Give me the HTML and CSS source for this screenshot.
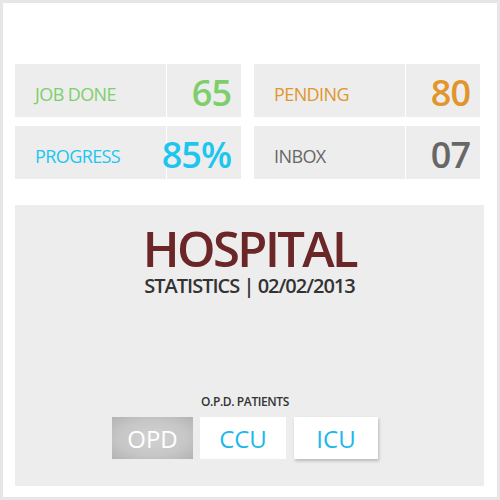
FILE: index.html
```html
<!DOCTYPE html>
<html lang="en">
<head>
  <meta charset="utf-8">
  <meta content="initial-scale=1" name="viewport">
  <title>Hospital Statistics</title>
  <link rel="stylesheet" href="styles.css">
</head>
<body>
  <div class="frame">
    <div class="stats">
      <div class="stat">
        <span class="stat-label green">JOB DONE</span>
        <span class="stat-value green">65</span>
      </div>
      <div class="stat">
        <span class="stat-label orange">PENDING</span>
        <span class="stat-value orange">80</span>
      </div>
      <div class="stat">
        <span class="stat-label cyan">PROGRESS</span>
        <span class="stat-value cyan">85%</span>
      </div>
      <div class="stat">
        <span class="stat-label grey">INBOX</span>
        <span class="stat-value grey">07</span>
      </div>
    </div>
    <div class="panel">
      <h1 class="title">HOSPITAL</h1>
      <p class="subtitle">STATISTICS | 02/02/2013</p>
      <div class="patients">
        <p class="patients-label">O.P.D. PATIENTS</p>
        <div class="tabs">
          <button class="tab tab-active" type="button">OPD</button>
          <button class="tab" type="button">CCU</button>
          <button class="tab tab-raised" type="button">ICU</button>
        </div>
      </div>
    </div>
  </div>
</body>
</html>
```

FILE: styles.css
```css
html, body { margin: 0; padding: 0; font-family: "Open Sans", sans-serif; }
.frame { width: 500px; height: 500px; box-sizing: border-box; border: 3px solid #e6e6e6; background: #fff; padding: 61px 13px 11px 12px; display: flex; flex-direction: column; }
.stats { display: grid; grid-template-columns: 226px 226px; grid-auto-rows: 52px; column-gap: 13px; row-gap: 10px; }
.stat { display: grid; grid-template-columns: 151px 74px; column-gap: 1px; }
.stat-label, .stat-value { background: #ededed; display: flex; align-items: center; padding-top: 6px; box-sizing: border-box; }
.stat-label { font-size: 18px; letter-spacing: -0.6px; padding-left: 20px; }
.stat-value { font-size: 36px; font-weight: 600; letter-spacing: -1px; justify-content: flex-end; padding-right: 10px; padding-top: 4px; }
.green { color: #7ecf6c; }
.orange { color: #e1952b; }
.cyan { color: #1cc6ef; }
.grey { color: #676767; }
.panel { margin-top: 27px; flex: 1; background: #ededed; display: flex; flex-direction: column; align-items: center; padding: 18px 0 27px; }
.title { margin: 0; font-size: 49px; line-height: 50px; font-weight: 600; letter-spacing: -2.6px; color: #6b2627; }
.subtitle { margin: 2px 0 0; font-size: 20px; line-height: 22px; font-weight: 600; letter-spacing: -1px; color: #333; }
.patients { margin-top: auto; display: flex; flex-direction: column; align-items: center; margin-right: 9px; }
.patients-label { margin: 0 0 9px; font-size: 12px; line-height: 1; font-weight: 600; letter-spacing: -0.4px; color: #333; }
.tabs { display: flex; gap: 7px; }
.tab { height: 42px; border: none; border-radius: 0; background: #fff; color: #1bb8e9; font-family: inherit; font-size: 24px; padding: 0; cursor: pointer; }
.tab:nth-child(1) { width: 81px; }
.tab:nth-child(2) { width: 86px; }
.tab:nth-child(3) { width: 84px; margin-left: 1px; }
.tab-active { color: #fff; background: radial-gradient(ellipse at center, #d2d2d2 0%, #c6c6c6 60%, #b3b3b3 100%); }
.tab-raised { box-shadow: 1px 2px 3px rgba(0, 0, 0, 0.22); }
```
